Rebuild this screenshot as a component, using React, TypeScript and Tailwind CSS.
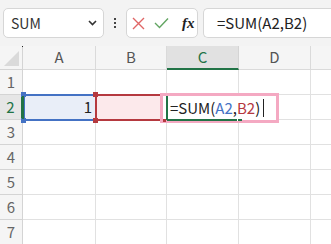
import React from 'react';

// E is only partly on screen, so its header label stays empty
const cols = ['A', 'B', 'C', 'D', ''];
const rows = [1, 2, 3, 4, 5, 6, 7];

const font = { fontFamily: '"Noto Sans CJK JP", "Noto Sans", sans-serif' };

function Handle({ x, y, color }: { x: number; y: number; color: string }) {
  return <div className={`absolute w-[5px] h-[5px] ${color}`} style={{ left: x, top: y }} />;
}

export default function App() {
  return (
    <div className="w-[331px] h-[244px] overflow-hidden bg-white relative" style={font}>
      {/* Formula bar */}
      <div className="h-[46px] bg-[#f3f3f3] flex items-start pt-[8px] pl-[3px]">
        <div className="shrink-0 w-[101px] h-[30px] bg-white border border-[#d6d6d6] rounded-[5px] flex items-center pl-[7px] pr-[6px] text-[14px] text-[#333]">
          <span className="flex-1">SUM</span>
          <svg width="9" height="6" viewBox="0 0 9 6">
            <path d="M1 1 L4.5 4.5 L8 1" fill="none" stroke="#333" strokeWidth="1.6" />
          </svg>
        </div>
        <div className="shrink-0 w-[22px] h-[30px] flex flex-col items-center justify-center gap-[2px]">
          <span className="w-[2px] h-[2px] bg-[#444]" />
          <span className="w-[2px] h-[2px] bg-[#444]" />
          <span className="w-[2px] h-[2px] bg-[#444]" />
        </div>
        <div className="shrink-0 w-[72px] h-[30px] bg-white border border-[#d6d6d6] rounded-[5px] flex items-center pl-[5px] gap-[9px]">
          <svg width="13" height="13" viewBox="0 0 13 13">
            <path d="M1 1 L12 12 M12 1 L1 12" stroke="#e06666" strokeWidth="1.4" />
          </svg>
          <svg width="15" height="12" viewBox="0 0 15 12">
            <path d="M1 6 L5.5 10.5 L14 1.5" fill="none" stroke="#62a562" strokeWidth="1.4" />
          </svg>
          <span className="ml-[4px] text-[15px] italic font-bold text-[#222]" style={{ fontFamily: '"Liberation Serif", serif' }}>
            fx
          </span>
        </div>
        <div className="ml-[5px] w-[128px] shrink-0 h-[30px] bg-white border border-r-0 border-[#d6d6d6] rounded-l-[5px] flex items-center pl-[13px] text-[15px] text-[#222]">
          =SUM(A2,B2)
        </div>
      </div>

      {/* Grid */}
      <div className="relative">
        <div className="grid grid-cols-[23px_73px_71px_72px_72px_72px] grid-rows-[24px_repeat(7,25px)]">
          <div className="relative bg-[#f5f5f5] border-r border-b border-[#d4d4d4]">
            <svg className="absolute right-[3px] bottom-[3px]" width="15" height="15" viewBox="0 0 15 15">
              <path d="M15 0 L15 15 L0 15 Z" fill="#dadada" />
            </svg>
            <div className="absolute right-[-1px] top-0 w-[1px] h-[1px] bg-[#222]" />
          </div>
          {cols.map((c, i) =>
            c === 'C' ? (
              <div key={i} className="bg-[#e1e1e1] border-r border-[#d4d4d4] border-b-2 border-b-[#217346] flex items-center justify-center text-[15px] text-[#217346]">
                {c}
              </div>
            ) : (
              <div key={i} className="bg-[#f5f5f5] border-r border-b border-[#dadada] flex items-center justify-center text-[15px] text-[#555]">
                {c}
              </div>
            )
          )}
          {rows.map((r) => (
            <React.Fragment key={r}>
              {r === 2 ? (
                <div className="bg-[#e6e6e6] border-r-2 border-r-[#217346] border-b border-[#d4d4d4] flex items-center justify-center text-[15px] text-[#217346]">
                  {r}
                </div>
              ) : (
                <div className="bg-[#f5f5f5] border-r border-b border-[#d4d4d4] flex items-center justify-center text-[15px] text-[#666]">
                  {r}
                </div>
              )}
              {cols.map((c, i) => (
                <div key={i} className="border-r border-b border-[#e1e1e1]" />
              ))}
            </React.Fragment>
          ))}
        </div>

        {/* A2 reference (blue) */}
        <div className="absolute left-[23px] top-[48px] w-[74px] h-[27px] border-2 border-[#4472c4] bg-[#e9eef8] flex items-center justify-end pr-[3px] text-[15px] text-[#222]">
          1
        </div>
        <Handle x={21} y={46} color="bg-[#4472c4]" />
        <Handle x={21} y={72} color="bg-[#4472c4]" />
        <div className="absolute left-[22px] top-[50px] w-[2px] h-[23px] bg-[#217346]" />

        {/* B2 reference (red) */}
        <div className="absolute left-[95px] top-[48px] w-[73px] h-[27px] border-2 border-[#b5393f] bg-[#fce9eb]" />
        <Handle x={93} y={46} color="bg-[#b5393f]" />
        <Handle x={93} y={72} color="bg-[#b5393f]" />

        {/* Editing cell C2 */}
        <div className="absolute left-[160px] top-[47px] w-[119px] h-[30px] border-[3px] border-[#f4a9c2] bg-white flex items-center pl-[7px] text-[15px] text-[#222]">
          <span>=SUM(</span>
          <span className="text-[#4472c4]">A2</span>
          <span>,</span>
          <span className="text-[#b5393f]">B2</span>
          <span>)</span>
          <span className="ml-[3px] w-[1px] h-[18px] bg-[#222]" />
        </div>
        <div className="absolute left-[166px] top-[50px] w-[2px] h-[24px] bg-[#217346]" />
        <div className="absolute left-[163px] top-[73px] w-[3px] h-[3px] bg-[#b5393f]" />
        <div className="absolute left-[167px] top-[73px] w-[75px] h-[2px] bg-[#217346]" />
        <div className="absolute left-[237px] top-[73px] w-[1px] h-[2px] bg-white" />
      </div>
    </div>
  );
}
